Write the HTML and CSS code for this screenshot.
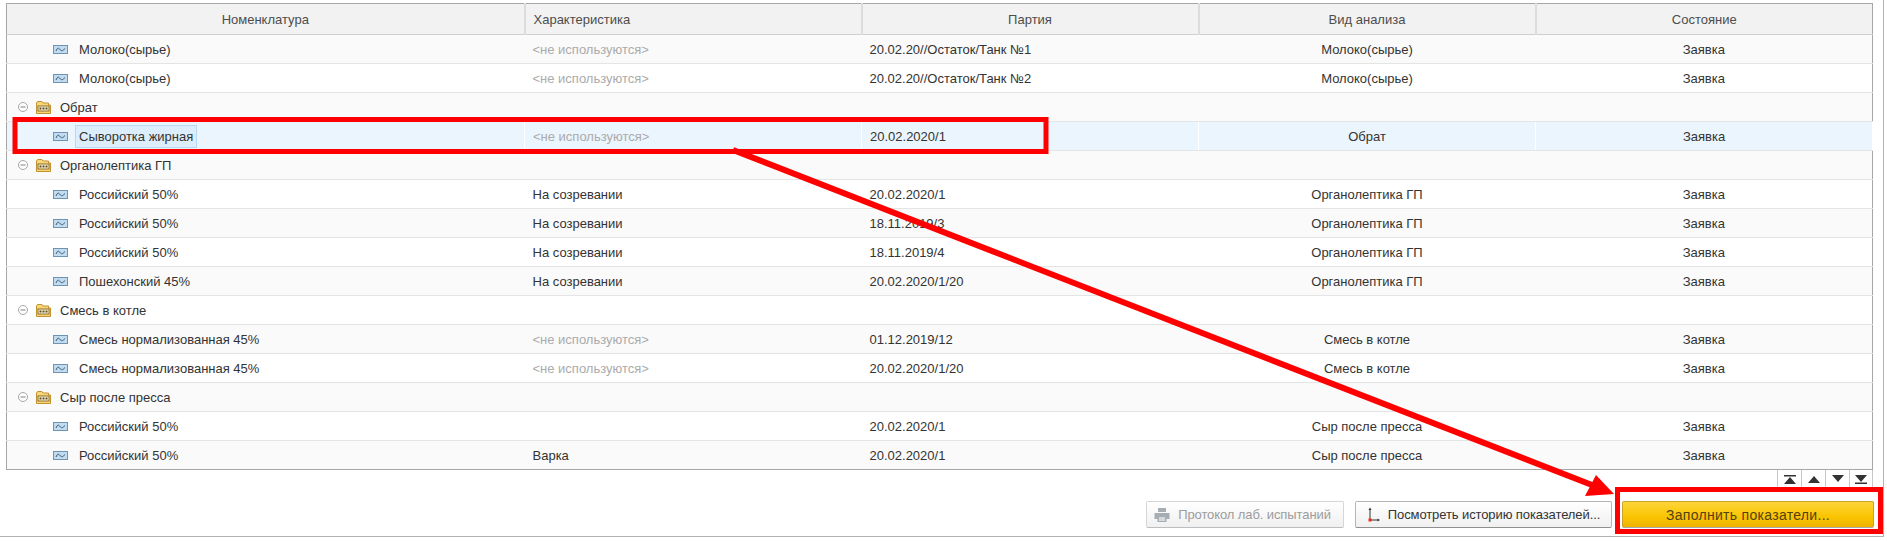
FILE: index.html
```html
<!DOCTYPE html>
<html lang="ru">
<head>
  <meta charset="UTF-8">
  <meta name="viewport" content="width=device-width, initial-scale=1.0">
  <title>Лабораторные анализы</title>
  <link rel="stylesheet" href="styles.css">
</head>
<body>
  <svg class="icon-defs" width="0" height="0">
    <symbol id="item" viewBox="0 0 15 9">
      <rect x="0.5" y="0.5" width="14" height="8" fill="#c3dbef" stroke="#6f93b3"/>
      <path d="M3 6 C4.5 2.5 5.5 2.5 7 4.5 S9.5 6 12 3.5" fill="none" stroke="#2f5878"/>
    </symbol>
    <symbol id="folder" viewBox="0 0 15 13">
      <path d="M0.5 2 L1.5 0.5 H6 L7 2 H12.5 V4 H14.5 V12.5 H0.5 Z" fill="#f9d67a" stroke="#c2932c"/>
      <rect x="2" y="5" width="11" height="5" fill="#fff8e0" stroke="#8a6d26"/>
      <path d="M3.5 7.5 H5.5 M6.5 7.5 H8.5 M9.5 7.5 H11.5" stroke="#5c4a18" stroke-width="2"/>
    </symbol>
    <symbol id="minus" viewBox="0 0 10 10">
      <circle cx="5" cy="5" r="4.5" fill="#fff" stroke="#a6a6a6"/>
      <path d="M2.5 5 H7.5" stroke="#808080"/>
    </symbol>
  </svg>

  <div class="page">
    <table class="grid">
      <colgroup>
        <col class="col-name">
        <col class="col-wide">
        <col class="col-wide">
        <col class="col-wide">
        <col>
      </colgroup>
      <thead>
        <tr>
          <th>Номенклатура</th>
          <th class="left">Характеристика</th>
          <th>Партия</th>
          <th>Вид анализа</th>
          <th>Состояние</th>
        </tr>
      </thead>
      <tbody>
        <tr>
          <td><span class="item"><svg class="item-icon"><use href="#item"/></svg><span class="item-text">Молоко(сырье)</span></span></td>
          <td class="muted">&lt;не используются&gt;</td>
          <td>20.02.20//Остаток/Танк №1</td>
          <td class="center">Молоко(сырье)</td>
          <td class="center">Заявка</td>
        </tr>
        <tr class="white">
          <td><span class="item"><svg class="item-icon"><use href="#item"/></svg><span class="item-text">Молоко(сырье)</span></span></td>
          <td class="muted">&lt;не используются&gt;</td>
          <td>20.02.20//Остаток/Танк №2</td>
          <td class="center">Молоко(сырье)</td>
          <td class="center">Заявка</td>
        </tr>
        <tr>
          <td colspan="5"><span class="group"><svg class="minus-icon"><use href="#minus"/></svg><svg class="folder-icon"><use href="#folder"/></svg>Обрат</span></td>
        </tr>
        <tr class="selected">
          <td><span class="item"><svg class="item-icon"><use href="#item"/></svg><span class="item-text current">Сыворотка жирная</span></span></td>
          <td class="muted">&lt;не используются&gt;</td>
          <td>20.02.2020/1</td>
          <td class="center">Обрат</td>
          <td class="center">Заявка</td>
        </tr>
        <tr>
          <td colspan="5"><span class="group"><svg class="minus-icon"><use href="#minus"/></svg><svg class="folder-icon"><use href="#folder"/></svg>Органолептика ГП</span></td>
        </tr>
        <tr class="white">
          <td><span class="item"><svg class="item-icon"><use href="#item"/></svg><span class="item-text">Российский 50%</span></span></td>
          <td>На созревании</td>
          <td>20.02.2020/1</td>
          <td class="center">Органолептика ГП</td>
          <td class="center">Заявка</td>
        </tr>
        <tr>
          <td><span class="item"><svg class="item-icon"><use href="#item"/></svg><span class="item-text">Российский 50%</span></span></td>
          <td>На созревании</td>
          <td>18.11.2019/3</td>
          <td class="center">Органолептика ГП</td>
          <td class="center">Заявка</td>
        </tr>
        <tr class="white">
          <td><span class="item"><svg class="item-icon"><use href="#item"/></svg><span class="item-text">Российский 50%</span></span></td>
          <td>На созревании</td>
          <td>18.11.2019/4</td>
          <td class="center">Органолептика ГП</td>
          <td class="center">Заявка</td>
        </tr>
        <tr>
          <td><span class="item"><svg class="item-icon"><use href="#item"/></svg><span class="item-text">Пошехонский 45%</span></span></td>
          <td>На созревании</td>
          <td>20.02.2020/1/20</td>
          <td class="center">Органолептика ГП</td>
          <td class="center">Заявка</td>
        </tr>
        <tr class="white">
          <td colspan="5"><span class="group"><svg class="minus-icon"><use href="#minus"/></svg><svg class="folder-icon"><use href="#folder"/></svg>Смесь в котле</span></td>
        </tr>
        <tr>
          <td><span class="item"><svg class="item-icon"><use href="#item"/></svg><span class="item-text">Смесь нормализованная 45%</span></span></td>
          <td class="muted">&lt;не используются&gt;</td>
          <td>01.12.2019/12</td>
          <td class="center">Смесь в котле</td>
          <td class="center">Заявка</td>
        </tr>
        <tr class="white">
          <td><span class="item"><svg class="item-icon"><use href="#item"/></svg><span class="item-text">Смесь нормализованная 45%</span></span></td>
          <td class="muted">&lt;не используются&gt;</td>
          <td>20.02.2020/1/20</td>
          <td class="center">Смесь в котле</td>
          <td class="center">Заявка</td>
        </tr>
        <tr>
          <td colspan="5"><span class="group"><svg class="minus-icon"><use href="#minus"/></svg><svg class="folder-icon"><use href="#folder"/></svg>Сыр после пресса</span></td>
        </tr>
        <tr class="white">
          <td><span class="item"><svg class="item-icon"><use href="#item"/></svg><span class="item-text">Российский 50%</span></span></td>
          <td></td>
          <td>20.02.2020/1</td>
          <td class="center">Сыр после пресса</td>
          <td class="center">Заявка</td>
        </tr>
        <tr>
          <td><span class="item"><svg class="item-icon"><use href="#item"/></svg><span class="item-text">Российский 50%</span></span></td>
          <td>Варка</td>
          <td>20.02.2020/1</td>
          <td class="center">Сыр после пресса</td>
          <td class="center">Заявка</td>
        </tr>
      </tbody>
    </table>

    <div class="pager">
      <button class="pager-btn" type="button"><svg width="14" height="9" viewBox="0 0 14 9"><path d="M1 0 H13 V1.5 H1 Z M7 2 L13 9 H1 Z" fill="#333"/></svg></button>
      <button class="pager-btn" type="button"><svg width="14" height="8" viewBox="0 0 14 8"><path d="M7 1 L13 8 H1 Z" fill="#333"/></svg></button>
      <button class="pager-btn" type="button"><svg width="14" height="8" viewBox="0 0 14 8"><path d="M1 0 H13 L7 7 Z" fill="#333"/></svg></button>
      <button class="pager-btn" type="button"><svg width="14" height="9" viewBox="0 0 14 9"><path d="M1 0 H13 L7 7 Z M1 7.5 H13 V9 H1 Z" fill="#333"/></svg></button>
    </div>

    <div class="actions">
      <button class="btn btn-print" type="button" disabled>
        <svg width="16" height="14" viewBox="0 0 16 14"><path d="M4 0 H12 V4 H4 Z M0.5 5 H15.5 V11 H12.5 V14 H3.5 V11 H0.5 Z" fill="#a6adb3"/><rect x="5" y="9" width="6" height="4" fill="#d5d9dc"/></svg>
        Протокол лаб. испытаний
      </button>
      <button class="btn btn-history" type="button">
        <svg width="13" height="15" viewBox="0 0 13 15"><path d="M3 2 V13 H11" fill="none" stroke="#333"/><path d="M1.5 3 L3 0.5 L4.5 3 Z M10.5 11.5 L13 13 L10.5 14.5 Z" fill="#333"/><rect x="1.5" y="11.5" width="3" height="3" fill="#e62e1b"/></svg>
        Посмотреть историю показателей...
      </button>
      <button class="btn btn-primary" type="button">Заполнить показатели...</button>
    </div>
  </div>

  <!-- red marks drawn over the screenshot -->
  <svg class="marks" width="1887" height="541" viewBox="0 0 1887 541">
    <g fill="none" stroke="#ff0000" stroke-width="5">
      <rect x="15" y="119.5" width="1031" height="32"/>
      <rect x="1617.5" y="489.5" width="263" height="42"/>
    </g>
    <path d="M733 150 L1592 485" stroke="#ff0000" stroke-width="6" fill="none"/>
    <path d="M1614 494 L1585 496 L1596 475 Z" fill="#ff0000"/>
  </svg>
</body>
</html>
```

FILE: styles.css
```css
body {
  margin: 0;
  background-color: #fff;
  font-family: "Liberation Sans", Arial, sans-serif;
  font-size: 13px;
  color: #333;
}

.icon-defs {
  display: block;
  height: 0;
}

.page {
  box-sizing: border-box;
  width: 1884px;
  height: 537px;
  padding: 3px 9px 0 6px;
  border-right: 1px solid #b3b3b3;
  border-bottom: 1px solid #b3b3b3;
}

/* Table */
.grid {
  width: 1867px;
  table-layout: fixed;
  border-collapse: collapse;
  border: 1px solid #a6a6a6;
}

.col-name {
  width: 518px;
}

.col-wide {
  width: 337px;
}

.grid th {
  height: 30px;
  padding: 0;
  background-color: #f2f2f2;
  border-right: 2px solid #dcdcdc;
  border-bottom: 1px solid #cfcfcf;
  font-weight: normal;
  color: #4d4d4d;
}

.grid th:last-child {
  border-right: none;
}

.grid th.left {
  padding-left: 8px;
  text-align: left;
}

.grid td {
  box-sizing: border-box;
  height: 29px;
  padding: 0 0 0 8px;
  background-color: #fafafa;
  border-bottom: 1px solid #e4e4e4;
  white-space: nowrap;
}

.grid tr:last-child td {
  border-bottom: none;
}

.grid .white td {
  background-color: #fff;
}

.grid .selected td {
  background-color: #ebf5fd;
  border-right: 1px solid #fff;
}

.grid td.center {
  padding-left: 0;
  text-align: center;
}

.grid td.muted {
  color: #ababab;
}

.item,
.group {
  display: flex;
  align-items: center;
}

.item {
  padding-left: 38px;
}

.group {
  padding-left: 3px;
}

.item-icon {
  width: 15px;
  height: 9px;
}

.item-text {
  margin-left: 7px;
  padding: 0 3px;
  line-height: 21px;
  border: 1px solid transparent;
}

.item-text.current {
  background-color: #dcedfb;
  border-color: #b7d9f3;
}

.minus-icon {
  width: 10px;
  height: 10px;
}

.folder-icon {
  width: 15px;
  height: 13px;
  margin: 0 9px 0 8px;
}

/* Pager */
.pager {
  display: flex;
  justify-content: flex-end;
  margin-right: 1px;
}

.pager-btn {
  display: flex;
  align-items: center;
  justify-content: center;
  width: 24px;
  height: 18px;
  padding: 0;
  background-color: #fff;
  border: none;
  border-left: 1px solid #c8c8c8;
}

.pager-btn:last-child {
  border-right: 1px solid #c8c8c8;
}

/* Bottom buttons */
.actions {
  display: flex;
  justify-content: flex-end;
  gap: 10px;
  margin-top: 13px;
}

.btn {
  display: flex;
  align-items: center;
  justify-content: center;
  gap: 8px;
  box-sizing: border-box;
  height: 27px;
  padding: 0;
  font-family: inherit;
  font-size: 13px;
  letter-spacing: -0.1px;
  color: #333;
  background: linear-gradient(#fff, #f0f0f0);
  border: 1px solid #b5b5b5;
  border-bottom-color: #8f8f8f;
  border-radius: 2px;
}

.btn-print {
  width: 198px;
  margin-right: 1px;
  padding-right: 5px;
  color: #9c9c9c;
  border-color: #d6d6d6;
  border-bottom-color: #bdbdbd;
}

.btn-history {
  width: 257px;
}

.btn-primary {
  width: 252px;
  font-size: 14px;
  letter-spacing: 0.3px;
  color: #54420f;
  background: linear-gradient(#fdd53a, #f9c400 60%, #efb300);
  border-color: #c9a22a;
  border-bottom-color: #a9a9a9;
}

/* Overlay annotation */
.marks {
  position: absolute;
  top: 0;
  left: 0;
  pointer-events: none;
}
```
